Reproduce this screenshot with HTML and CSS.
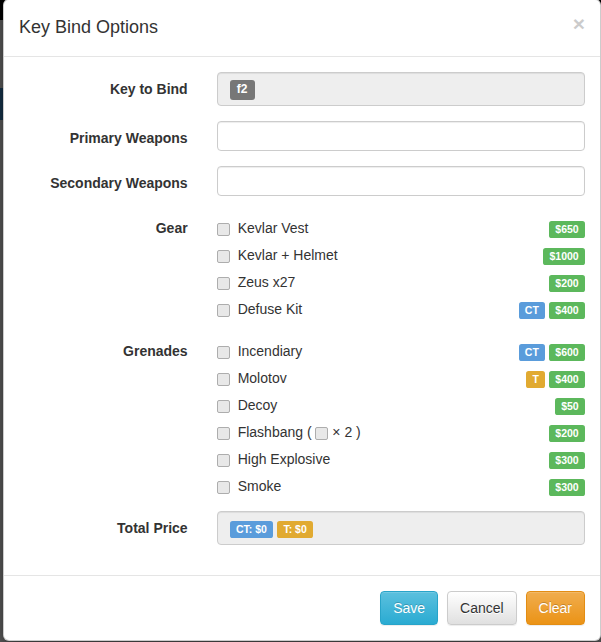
FILE: index.html
```
<!DOCTYPE html>
<html lang="en">
<head>
<meta charset="utf-8">
<title>Key Bind Options</title>
<link rel="stylesheet" href="styles.css">
</head>
<body>
<div class="modal">
  <div class="modal-header">
    <button class="close" type="button">×</button>
    <h4 class="modal-title">Key Bind Options</h4>
  </div>
  <div class="modal-body">
    <form class="form-horizontal">
      <div class="form-group">
        <label class="control-label">Key to Bind</label>
        <div class="field">
          <div class="static-box"><span class="tag tag-key">f2</span></div>
        </div>
      </div>
      <div class="form-group">
        <label class="control-label">Primary Weapons</label>
        <div class="field"><input class="text-input" type="text"></div>
      </div>
      <div class="form-group">
        <label class="control-label">Secondary Weapons</label>
        <div class="field"><input class="text-input" type="text"></div>
      </div>
      <div class="form-group">
        <label class="control-label">Gear</label>
        <div class="field">
          <div class="check-row"><label class="check-label"><input class="check" type="checkbox">Kevlar Vest</label><span class="tags"><span class="tag tag-price">$650</span></span></div>
          <div class="check-row"><label class="check-label"><input class="check" type="checkbox">Kevlar + Helmet</label><span class="tags"><span class="tag tag-price">$1000</span></span></div>
          <div class="check-row"><label class="check-label"><input class="check" type="checkbox">Zeus x27</label><span class="tags"><span class="tag tag-price">$200</span></span></div>
          <div class="check-row"><label class="check-label"><input class="check" type="checkbox">Defuse Kit</label><span class="tags"><span class="tag tag-ct">CT</span> <span class="tag tag-price">$400</span></span></div>
        </div>
      </div>
      <div class="form-group">
        <label class="control-label">Grenades</label>
        <div class="field">
          <div class="check-row"><label class="check-label"><input class="check" type="checkbox">Incendiary</label><span class="tags"><span class="tag tag-ct">CT</span> <span class="tag tag-price">$600</span></span></div>
          <div class="check-row"><label class="check-label"><input class="check" type="checkbox">Molotov</label><span class="tags"><span class="tag tag-t">T</span> <span class="tag tag-price">$400</span></span></div>
          <div class="check-row"><label class="check-label"><input class="check" type="checkbox">Decoy</label><span class="tags"><span class="tag tag-price">$50</span></span></div>
          <div class="check-row"><label class="check-label"><input class="check" type="checkbox">Flashbang ( <input class="check-inline" type="checkbox"> × 2 )</label><span class="tags"><span class="tag tag-price">$200</span></span></div>
          <div class="check-row"><label class="check-label"><input class="check" type="checkbox">High Explosive</label><span class="tags"><span class="tag tag-price">$300</span></span></div>
          <div class="check-row"><label class="check-label"><input class="check" type="checkbox">Smoke</label><span class="tags"><span class="tag tag-price">$300</span></span></div>
        </div>
      </div>
      <div class="form-group">
        <label class="control-label">Total Price</label>
        <div class="field">
          <div class="static-box"><span class="tag tag-ct">CT: $0</span> <span class="tag tag-t">T: $0</span></div>
        </div>
      </div>
    </form>
  </div>
  <div class="modal-footer">
    <button class="btn btn-save" type="button">Save</button>
    <button class="btn btn-cancel" type="button">Cancel</button>
    <button class="btn btn-clear" type="button">Clear</button>
  </div>
</div>
</body>
</html>
```
FILE: styles.css
```
* { box-sizing: border-box; }
html, body { height: 100%; }
body {
  margin: 0;
  overflow: hidden;
  font-family: "Liberation Sans", Arial, sans-serif;
  font-size: 14px;
  line-height: 1.42857143;
  color: #333;
  background: linear-gradient(to bottom, #000 0, #000 20px, #5a5a5a 20px, #5a5a5a 88px, #16334a 88px, #16334a 120px, #5a5a5a 120px, #5a5a5a 100%);
}
.modal {
  width: 598px;
  margin: -1px 0 0 3px;
  background: #fff;
  border: 1px solid rgba(0, 0, 0, .2);
  border-radius: 6px;
  box-shadow: 0 5px 15px rgba(0, 0, 0, .5);
}
.modal-header {
  padding: 15px;
  border-bottom: 1px solid #e5e5e5;
}
.modal-header::after { content: ""; display: block; clear: both; }
.modal-title {
  margin: 0;
  font-size: 18px;
  font-weight: 500;
  line-height: 1.42857143;
}
.close {
  float: right;
  margin-top: -2px;
  padding: 0;
  border: 0;
  background: transparent;
  font-family: "Liberation Sans", Arial, sans-serif;
  font-size: 21px;
  font-weight: bold;
  line-height: 1;
  color: #000;
  opacity: .2;
  text-shadow: 0 1px 0 #fff;
  cursor: pointer;
}
.modal-body { padding: 15px; }
.form-horizontal { margin: 0; }
.form-group {
  display: grid;
  grid-template-columns: 1fr 2fr;
  margin: 0 -15px 15px;
}
.control-label {
  padding: 7px 15px 0;
  text-align: right;
  font-weight: bold;
}
.field { padding: 0 15px 0 14px; min-width: 0; }
.static-box {
  height: 34px;
  padding: 6px 12px;
  background: #eee;
  border: 1px solid #ccc;
  border-radius: 4px;
  box-shadow: inset 0 1px 1px rgba(0, 0, 0, .075);
}
.text-input {
  display: block;
  width: 100%;
  height: 30px;
  padding: 5px 10px;
  font: inherit;
  color: #555;
  background: #fff;
  border: 1px solid #ccc;
  border-radius: 4px;
  box-shadow: inset 0 1px 1px rgba(0, 0, 0, .075);
  outline: none;
}
.check-row {
  display: flex;
  min-height: 27px;
  padding-top: 7px;
}
.check-label {
  position: relative;
  padding-left: 21px;
  font-weight: normal;
  white-space: nowrap;
}
.check, .check-inline {
  -webkit-appearance: none;
  appearance: none;
  width: 13px;
  height: 13px;
  margin: 0;
  background: #e8e8e8;
  border: 1px solid #adadad;
  border-radius: 2px;
}
.check {
  position: absolute;
  left: 0;
  top: 5px;
}
.check-inline { vertical-align: middle; }
.tags { margin-left: auto; white-space: nowrap; }
.tag {
  display: inline;
  padding: .2em .6em .3em;
  font-size: 75%;
  font-weight: bold;
  line-height: 1;
  color: #fff;
  text-align: center;
  white-space: nowrap;
  vertical-align: baseline;
  border-radius: .25em;
}
.tag-key { background: #777; font-size: 12px; }
.tag-price { background: #5cb85c; }
.tag-ct { background: #5a9cdb; }
.tag-t { background: #e1aa31; }
.modal-footer {
  padding: 15px;
  text-align: right;
  border-top: 1px solid #e5e5e5;
}
.btn {
  display: inline-block;
  padding: 6px 12px;
  font-family: inherit;
  font-size: 14px;
  line-height: 1.42857143;
  border: 1px solid transparent;
  border-radius: 4px;
  cursor: pointer;
  box-shadow: inset 0 1px 0 rgba(255, 255, 255, .15), 0 1px 1px rgba(0, 0, 0, .075);
}
.btn + .btn { margin-left: 5px; }
.btn-save {
  color: #fff;
  text-shadow: 0 -1px 0 rgba(0, 0, 0, .2);
  background: linear-gradient(to bottom, #5bc0de 0, #2aabd2 100%);
  border-color: #28a4c9;
}
.btn-cancel {
  color: #333;
  text-shadow: 0 1px 0 #fff;
  background: linear-gradient(to bottom, #fff 0, #e0e0e0 100%);
  border-color: #ccc;
}
.btn-clear {
  color: #fff;
  text-shadow: 0 -1px 0 rgba(0, 0, 0, .2);
  background: linear-gradient(to bottom, #f0ad4e 0, #eb9316 100%);
  border-color: #e38d13;
}
```
